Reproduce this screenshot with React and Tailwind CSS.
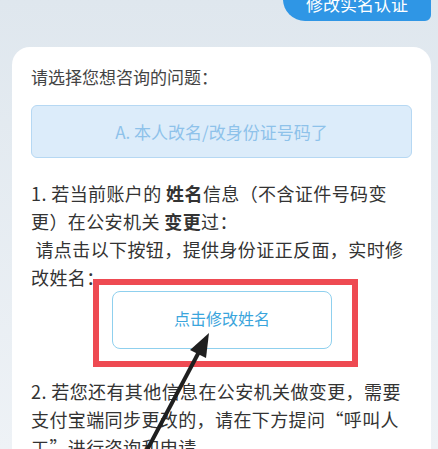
import React from "react";

function Arrow() {
  return (
    <svg
      className="pointer-events-none absolute left-0 top-0"
      width="438"
      height="449"
      viewBox="0 0 438 449"
    >
      <line x1="146" y1="452" x2="200" y2="350" stroke="#1f1f1f" strokeWidth="4" />
      <polygon points="209,333 206,358 190,350" fill="#1f1f1f" />
    </svg>
  );
}

export default function App() {
  return (
    <div
      className="relative h-[449px] w-[438px] overflow-hidden bg-gradient-to-b from-[#dfe7ee] to-[#eef2f6] text-[#333]"
      style={{ fontFamily: '"Noto Sans CJK SC", "Noto Sans", sans-serif' }}
    >
      <div className="flex justify-end pr-[7px]">
        <div className="-mt-[34px] flex h-[55px] w-[148px] items-end justify-center rounded-tl-[20px] rounded-bl-[22px] rounded-br-[6px] bg-[#2f96e5] pb-[5px] text-[17px] leading-[25px] text-white">
          修改实名认证
        </div>
      </div>

      <div className="ml-3 mr-[7px] mt-[26px] rounded-t-[18px] bg-white px-[19px] pb-6 pt-[17px]">
        <div className="text-[17px] leading-[26px] text-[#444]">请选择您想咨询的问题：</div>

        <div className="mt-[15px] flex h-[53px] items-center justify-center rounded-[6px] border border-[#b6d8f3] bg-[#dcecfa] text-[17px] text-[#8ec2ea]">
          A. 本人改名/改身份证号码了
        </div>

        <div className="mt-[21px] text-[18px] leading-[28px] tracking-[0.4px]">
          <div>
            1. 若当前账户的 <span className="font-bold">姓名</span>信息（不含证件号码变
          </div>
          <div>
            更）在公安机关 <span className="font-bold">变更</span>过：
          </div>
          <div>&nbsp;请点击以下按钮，提供身份证正反面，实时修</div>
          <div>改姓名：</div>
        </div>

        <div className="-mt-[12px] flex">
          <div className="ml-[62px] border-[6px] border-[#ee4a52] pb-[12px] pl-[13px] pr-[20px] pt-[6px]">
            <div className="flex h-[58px] w-[220px] items-center justify-center rounded-[8px] border border-[#8fd0ee] bg-white pb-[4px] text-[16px] text-[#3aa5dc]">
              点击修改姓名
            </div>
          </div>
        </div>

        <div className="mt-[10px] text-[18px] leading-[28px] tracking-[0.4px]">
          <div>2. 若您还有其他信息在公安机关做变更，需要</div>
          <div>支付宝端同步更改的，请在下方提问“呼叫人</div>
          <div>工”进行咨询和申请</div>
        </div>
      </div>

      <Arrow />
    </div>
  );
}
